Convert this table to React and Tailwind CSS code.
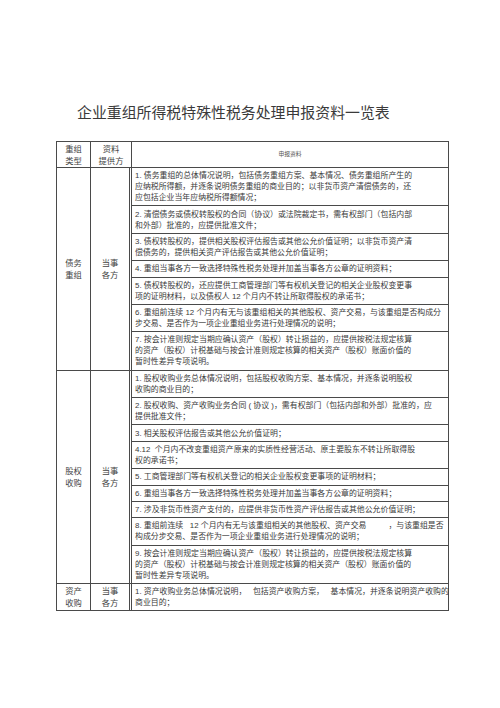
import React from "react";

const F = { fontFamily: '"Liberation Sans","Noto Sans CJK SC",sans-serif' };

const sections = [
  {
    a: ["债务", "重组"],
    b: ["当事", "各方"],
    items: [
      [
        "1. 债务重组的总体情况说明，包括债务重组方案、基本情况、债务重组所产生的",
        "应纳税所得额，并逐条说明债务重组的商业目的；以非货币资产清偿债务的，还",
        "应包括企业当年应纳税所得额情况；",
      ],
      [
        "2. 清偿债务或债权转股权的合同（协议）或法院裁定书，需有权部门（包括内部",
        "和外部）批准的，应提供批准文件；",
      ],
      [
        "3. 债权转股权的，提供相关股权评估报告或其他公允价值证明；以非货币资产清",
        "偿债务的，提供相关资产评估报告或其他公允价值证明；",
      ],
      ["4. 重组当事各方一致选择特殊性税务处理并加盖当事各方公章的证明资料；"],
      [
        "5. 债权转股权的，还应提供工商管理部门等有权机关登记的相关企业股权变更事",
        "项的证明材料，以及债权人 12 个月内不转让所取得股权的承诺书；",
      ],
      [
        "6. 重组前连续 12 个月内有无与该重组相关的其他股权、资产交易，与该重组是否构成分",
        "步交易、是否作为一项企业重组业务进行处理情况的说明；",
      ],
      [
        "7. 按会计准则规定当期应确认资产（股权）转让损益的，应提供按税法规定核算",
        "的资产（股权）计税基础与按会计准则规定核算的相关资产（股权）账面价值的",
        "暂时性差异专项说明。",
      ],
    ],
  },
  {
    a: ["股权", "收购"],
    b: ["当事", "各方"],
    items: [
      [
        "1. 股权收购业务总体情况说明，包括股权收购方案、基本情况，并逐条说明股权",
        "收购的商业目的；",
      ],
      [
        "2. 股权收购、资产收购业务合同 ( 协议 )，需有权部门（包括内部和外部）批准的，应",
        "提供批准文件；",
      ],
      ["3. 相关股权评估报告或其他公允价值证明；"],
      [
        "4.12  个月内不改变重组资产原来的实质性经营活动、原主要股东不转让所取得股",
        "权的承诺书；",
      ],
      ["5. 工商管理部门等有权机关登记的相关企业股权变更事项的证明材料；"],
      ["6. 重组当事各方一致选择特殊性税务处理并加盖当事各方公章的证明资料；"],
      ["7. 涉及非货币性资产支付的，应提供非货币性资产评估报告或其他公允价值证明；"],
      [
        "8. 重组前连续   12 个月内有无与该重组相关的其他股权、资产交易          ，与该重组是否",
        "构成分步交易、是否作为一项企业重组业务进行处理情况的说明；",
      ],
      [
        "9. 按会计准则规定当期应确认资产（股权）转让损益的，应提供按税法规定核算",
        "的资产（股权）计税基础与按会计准则规定核算的相关资产（股权）账面价值的",
        "暂时性差异专项说明。",
      ],
    ],
  },
  {
    a: ["资产", "收购"],
    b: ["当事", "各方"],
    items: [
      [
        "1. 资产收购业务总体情况说明，   包括资产收购方案，   基本情况，并逐条说明资产收购的",
        "商业目的；",
      ],
    ],
  },
];

function Label({ lines }) {
  return (
    <div className="flex flex-col items-center justify-center text-[8.3px] leading-[12px] text-[#444]">
      {lines.map((l, i) => (
        <div key={i}>{l}</div>
      ))}
    </div>
  );
}

export default function App() {
  return (
    <div className="w-[500px] h-[708px] bg-white overflow-hidden" style={F}>
      <div className="pt-[103px] pl-[77px] text-[14.9px] leading-[20px] text-[#3a3a3a] whitespace-nowrap">
        企业重组所得税特殊性税务处理申报资料一览表
      </div>
      <div className="mt-[18px] ml-[56px] w-[393px] border border-[#4a4a4a] text-[#3a3a3a]">
        <div className="flex h-[26px] border-b border-[#4a4a4a]">
          <div className="w-[34px] shrink-0 border-r border-[#4a4a4a] flex">
            <div className="m-auto">
              <Label lines={["重组", "类型"]} />
            </div>
          </div>
          <div className="w-[41px] shrink-0 border-r border-[#4a4a4a] flex">
            <div className="m-auto">
              <Label lines={["资料", "提供方"]} />
            </div>
          </div>
          <div className="flex-1 flex items-center justify-center text-[5.8px] text-[#555]">
            申报资料
          </div>
        </div>
        {sections.map((s, si) => (
          <div
            key={si}
            className={
              "flex " + (si < sections.length - 1 ? "border-b border-[#4a4a4a]" : "")
            }
          >
            <div className="w-[34px] shrink-0 border-r border-[#4a4a4a] flex items-center justify-center">
              <Label lines={s.a} />
            </div>
            <div className="w-[41px] shrink-0 border-r-[3px] border-double border-[#4a4a4a] flex items-center justify-center">
              <Label lines={s.b} />
            </div>
            <div className="flex-1 flex flex-col">
              {s.items.map((lines, ii) => (
                <div
                  key={ii}
                  className={
                    "pl-[3px] py-[2.2px] text-[7.9px] leading-[11px] text-[#3a3a3a] " +
                    (ii < s.items.length - 1 ? "border-b-[1.5px] border-[#4a4a4a]" : "")
                  }
                >
                  {lines.map((l, li) => (
                    <div key={li} className="whitespace-pre">
                      {l}
                    </div>
                  ))}
                </div>
              ))}
            </div>
          </div>
        ))}
      </div>
    </div>
  );
}
